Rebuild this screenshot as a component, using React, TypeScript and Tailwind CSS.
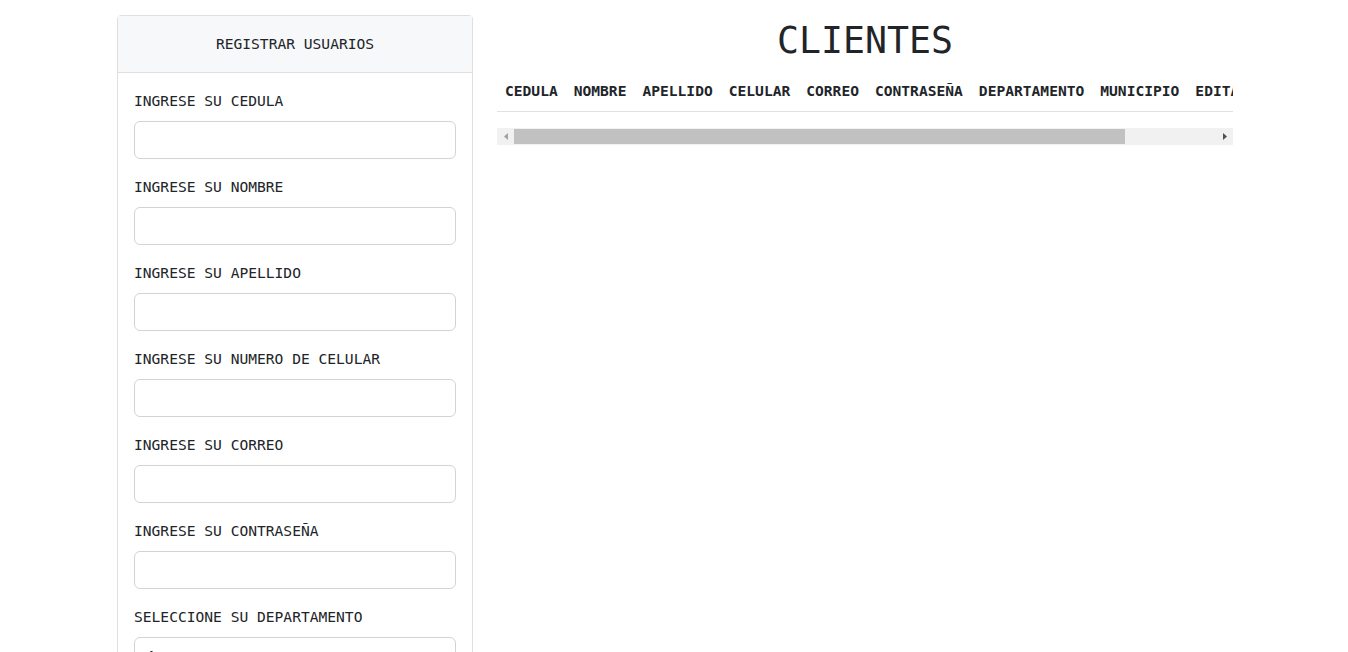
const campos = [
  'INGRESE SU CEDULA',
  'INGRESE SU NOMBRE',
  'INGRESE SU APELLIDO',
  'INGRESE SU NUMERO DE CELULAR',
  'INGRESE SU CORREO',
  'INGRESE SU CONTRASEÑA',
];

const columnas = [
  'CEDULA',
  'NOMBRE',
  'APELLIDO',
  'CELULAR',
  'CORREO',
  'CONTRASEÑA',
  'DEPARTAMENTO',
  'MUNICIPIO',
  'EDITAR',
  'ELIMINAR',
];

function Registro() {
  return (
    <div className="w-[356px] shrink-0 self-start border border-[#dfdfdf] rounded-t-[4px]">
      <div className="h-[57px] flex items-center justify-center bg-[#f7f8f9] border-b border-[#dfdfdf]">
        REGISTRAR USUARIOS
      </div>
      <form className="px-4 pt-4">
        {campos.map((c) => (
          <div key={c} className="mb-4">
            <label className="block leading-[24px] mb-2">{c}</label>
            <input
              type="text"
              className="block w-full h-[38px] border border-[#ced4da] rounded-md bg-white px-3 focus:outline-none"
            />
          </div>
        ))}
        <div className="mb-4">
          <label className="block leading-[24px] mb-2">SELECCIONE SU DEPARTAMENTO</label>
          <div className="h-[38px] border border-[#ced4da] rounded-md bg-white px-3 leading-[36px]">
            Amazonas
          </div>
        </div>
      </form>
    </div>
  );
}

function Clientes() {
  return (
    <div className="w-[736px] shrink-0">
      <h1 className="mt-[4px] mb-2 text-center text-[36.5px] leading-[44px]">CLIENTES</h1>
      <div className="overflow-hidden">
        <div className="flex border-b border-[#dee2e6] mb-4 w-max">
          {columnas.map((c) => (
            <div key={c} className="px-2 py-2 leading-[24px] font-bold whitespace-nowrap">
              {c}
            </div>
          ))}
        </div>
      </div>
      {/* barra de desplazamiento */}
      <div className="flex h-[17px] bg-[#f1f1f1]">
        <div className="w-[17px] flex items-center justify-center">
          <svg width="4" height="7" viewBox="0 0 4 7">
            <path d="M4 0 L0 3.5 L4 7 Z" fill="#a3a3a3" />
          </svg>
        </div>
        <div className="flex-1 flex items-center">
          <div className="h-[15px] w-[611px] bg-[#c1c1c1]" />
        </div>
        <div className="w-[17px] flex items-center justify-center">
          <svg width="4" height="7" viewBox="0 0 4 7">
            <path d="M0 0 L4 3.5 L0 7 Z" fill="#505050" />
          </svg>
        </div>
      </div>
    </div>
  );
}

export default function App() {
  return (
    <div className="h-[652px] overflow-hidden bg-white flex gap-6 pl-[117px] pt-[15px] text-[14.6px] text-[#212529] font-['DejaVu_Sans_Mono',monospace]">
      <Registro />
      <Clientes />
    </div>
  );
}
